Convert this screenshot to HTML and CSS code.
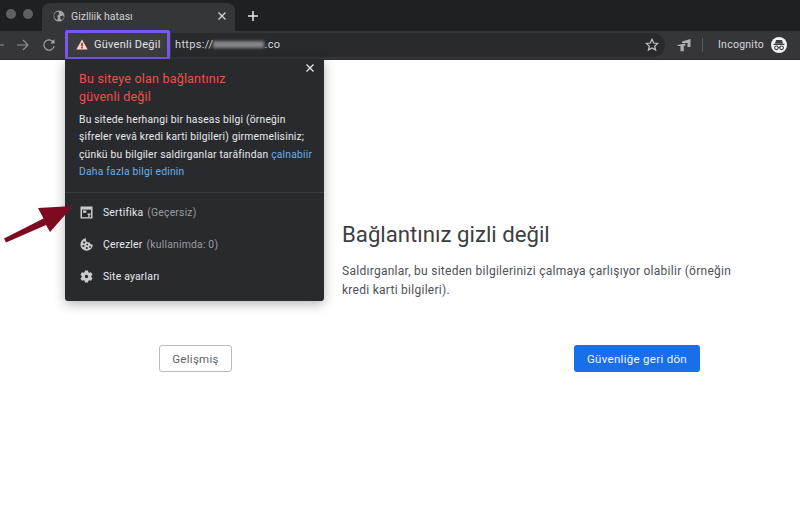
FILE: index.html
```html
<!DOCTYPE html>
<html lang="tr">
<head>
<meta charset="utf-8">
<title>Gizlilik hatası</title>
<link rel="stylesheet" href="styles.css">
</head>
<body>
<header class="chrome">
  <div class="tabstrip">
    <div class="lights"><span class="light"></span><span class="light"></span></div>
    <div class="tab">
      <svg class="globe" viewBox="0 0 12 12"><circle cx="6" cy="6" r="5.5" fill="#a3a5a8"/><path d="M2.4 2.4 5.4 1.6 6.2 4 4.2 6 5 8 4 10.2 1.6 8 1 5ZM7 6.4l3-1 1 2-2 2.6-1.5-1Z" fill="#35363a"/></svg>
      <span class="tab-title">Gizlliik hatası</span>
      <svg class="tab-close" viewBox="0 0 10 10"><path d="M1.5 1.5l7 7M8.5 1.5l-7 7" stroke="#d5d6d8" stroke-width="1.3"/></svg>
    </div>
    <svg class="new-tab" viewBox="0 0 12 12"><path d="M6 1v10M1 6h10" stroke="#e8eaed" stroke-width="1.5"/></svg>
  </div>
  <div class="toolbar">
    <svg class="nav-back" viewBox="0 0 14 14"><path d="M13 7H2M7 2 2 7l5 5" fill="none" stroke="#8f9195" stroke-width="1.2"/></svg>
    <svg class="nav-forward" viewBox="0 0 14 14"><path d="M1 7h11M7 2l5 5-5 5" fill="none" stroke="#8f9195" stroke-width="1.2"/></svg>
    <svg class="nav-reload" viewBox="0 0 14 14"><path d="M11.6 4.4A5.2 5.2 0 1 0 12.2 8" fill="none" stroke="#a5a7aa" stroke-width="1.2"/><path d="M12.5 1.2v4.2H8.3Z" fill="#a5a7aa"/></svg>
    <div class="omnibox">
      <div class="security">
        <svg class="warn" viewBox="0 0 12 11"><path d="M6 .5 11.7 10.5H.3Z" fill="#f8d4d0"/><path d="M5.2 3.8h1.6v3.6H5.2ZM5.2 8h1.6v1.4H5.2Z" fill="#b3201c"/></svg>
        <span>Güvenli Değil</span>
      </div>
      <div class="url">https://<span class="blur"></span>.co</div>
      <svg class="star" viewBox="0 0 14 14"><path d="M7 1.3 8.7 5l4 .4-3 2.7.9 4L7 10l-3.6 2.1.9-4-3-2.7 4-.4Z" fill="none" stroke="#c4c6c9" stroke-width="1.2"/></svg>
    </div>
    <svg class="ext" viewBox="0 0 14 14"><path d="M5 3.6 13.5 1v8h-3V5H5Z" fill="#aeb0b3"/><path d="M.5 7 8.3 5.6v2.2H6.8v5.4H3.5V8H.5Z" fill="#aeb0b3"/></svg>
    <span class="sep"></span>
    <span class="incognito">Incognito</span>
    <svg class="avatar" viewBox="0 0 16 16"><circle cx="8" cy="8" r="8" fill="#f1f3f4"/><path d="M5 3h6l1 3.4H4ZM2.6 6.8h10.8v1.2H2.6Z" fill="#3c4043"/><circle cx="5.4" cy="10.8" r="1.8" fill="none" stroke="#3c4043" stroke-width="1.1"/><circle cx="10.6" cy="10.8" r="1.8" fill="none" stroke="#3c4043" stroke-width="1.1"/><path d="M7 10.6h2" stroke="#3c4043"/></svg>
  </div>
</header>

<main class="page">
  <div class="interstitial">
    <h1 class="heading">Bağlantınız gizli değil</h1>
    <p class="body-text">Saldırganlar, bu siteden bilgilerinizi çalmaya çarlışıyor olabilir (örneğin kredi karti bilgileri).</p>
  </div>
  <div class="actions">
    <button class="btn btn-secondary">Gelişmiş</button>
    <button class="btn btn-primary">Güvenliğe geri dön</button>
  </div>
</main>

<div class="highlight"></div>

<aside class="popup">
  <svg class="popup-close" viewBox="0 0 10 10"><path d="M1.5 1.5l7 7M8.5 1.5l-7 7" stroke="#e8eaed" stroke-width="1.3"/></svg>
  <section class="popup-top">
    <h2 class="popup-title">Bu siteye olan bağlantınız<br>güvenli değil</h2>
    <p class="popup-text">Bu sitede herhangi bir haseas bilgi (örneğin<br>şifreler vevâ kredi karti bilgileri) girmemelisiniz;<br>çünkü bu bilgiler saldirganlar tarâfindan <a class="link">çalnabiir</a><br><a class="link">Daha fazla bilgi edinin</a></p>
  </section>
  <ul class="popup-list">
    <li class="popup-item">
      <svg class="item-icon" viewBox="0 0 13 13"><path d="M.5.5h12v12H.5Z" fill="#c9cbce"/><path d="M2 3.6h9v7.6H2Z" fill="#292a2d"/><path d="M3 4.6h3.4v2.2H3ZM7.6 7.6h3v1.4H9.6v2.2H8.2V9H7.6Z" fill="#c9cbce"/></svg>
      <span class="item-label">Sertifika</span> <span class="item-note">(Geçersiz)</span>
    </li>
    <li class="popup-item">
      <svg class="item-icon" viewBox="0 0 13 13"><path d="M6.2.3A6.2 6.2 0 1 0 12.8 6.6 2.8 2.8 0 0 1 9.6 4.3 2.8 2.8 0 0 1 6.2.3Z" fill="#c9cbce"/><circle cx="4.2" cy="4.4" r="1.1" fill="#292a2d"/><circle cx="3.4" cy="8" r="1.1" fill="#292a2d"/><circle cx="7.2" cy="6.6" r=".9" fill="#292a2d"/><circle cx="6.8" cy="10" r="1" fill="#292a2d"/><circle cx="10" cy="9" r=".9" fill="#292a2d"/></svg>
      <span class="item-label">Çerezler</span> <span class="item-note">(kullanimda: 0)</span>
    </li>
    <li class="popup-item">
      <svg class="item-icon" viewBox="0 0 14 14"><path fill-rule="evenodd" d="M5.4.6h3.2l.4 1.8 1.1.6 1.8-.6 1.6 2.8-1.4 1.3v1l1.4 1.3-1.6 2.8-1.8-.6-1.1.6-.4 1.8H5.4L5 11.6l-1.1-.6-1.8.6L.5 8.8l1.4-1.3v-1L.5 5.2l1.6-2.8 1.8.6L5 2.4ZM7 5.2a1.8 1.8 0 1 0 0 3.6A1.8 1.8 0 0 0 7 5.2Z" fill="#c9cbce"/></svg>
      <span class="item-label">Site ayarları</span>
    </li>
  </ul>
</aside>

<svg class="arrow" viewBox="0 0 80 46"><path d="M4 38.5 43.5 18.5 38 8 73 6 50 32 46 25 6 42.5Z" fill="#7e0a22"/></svg>
</body>
</html>
```
FILE: styles.css
```css
* { box-sizing: border-box; }
html, body { margin: 0; padding: 0; }
body {
  width: 800px;
  height: 529px;
  overflow: hidden;
  position: relative;
  background: #fff;
  font-family: Roboto, "Liberation Sans", sans-serif;
}

/* Browser chrome */
.chrome { height: 60px; display: flex; flex-direction: column; }
.tabstrip {
  height: 31px;
  background: #1f2023;
  display: flex;
  align-items: flex-start;
}
.lights { display: flex; gap: 7px; padding: 9px 0 0 6px; width: 42px; }
.light { width: 10px; height: 10px; border-radius: 50%; background: #5f6063; }
.tab {
  width: 193px;
  height: 28px;
  margin-top: 3px;
  background: #35363a;
  border-radius: 8px 8px 0 0;
  display: flex;
  align-items: center;
  padding: 0 8px 2px 11px;
  color: #d3d4d6;
}
.globe { width: 12px; height: 12px; }
.tab-title { font-size: 10.5px; margin-left: 6px; flex: 1; }
.tab-close { width: 10px; height: 10px; }
.new-tab { width: 12px; height: 12px; margin: 10px 0 0 12px; }

.toolbar {
  height: 29px;
  background: #35363a;
  border-bottom: 1px solid #2b2c2f;
  padding-bottom: 1px;
  display: flex;
  align-items: center;
  color: #e8eaed;
}
.nav-back { width: 14px; height: 14px; margin-left: -9px; }
.nav-forward { width: 14px; height: 14px; margin-left: 11px; }
.nav-reload { width: 14px; height: 14px; margin-left: 12px; }
.omnibox {
  width: 598px;
  height: 24px;
  margin-left: 11px;
  background: #292a2d;
  border-radius: 0 12px 12px 0;
  display: flex;
  align-items: center;
  padding-right: 6px;
}
.security {
  width: 104px;
  height: 100%;
  display: flex;
  align-items: center;
  gap: 6px;
  padding-left: 9px;
  background: #3c3d40;
  font-size: 11px;
  letter-spacing: .25px;
  color: #e3e4e6;
}
.warn { width: 12px; height: 11px; }
.url { margin-left: 4px; font-size: 11px; letter-spacing: .35px; color: #d5d6d8; flex: 1; display: flex; align-items: center; }
.blur { width: 51px; height: 7px; background: #85868a; filter: blur(1.5px); display: inline-block; }
.star { width: 14px; height: 14px; }
.ext { width: 14px; height: 14px; margin-left: 12px; }
.sep { width: 1px; height: 14px; background: #5a5b5e; margin-left: 11px; }
.incognito { font-size: 10.5px; letter-spacing: .25px; color: #d8d9db; margin-left: 15px; }
.avatar { width: 16px; height: 16px; margin-left: 7px; }

/* Interstitial */
.page { padding: 160px 0 0 0; }
.interstitial { padding-left: 342px; width: 745px; }
.heading { margin: 0; font-size: 22.2px; line-height: 28px; font-weight: 400; color: #3c4043; }
.body-text { margin: 14px 0 0; font-size: 12px; line-height: 19px; letter-spacing: .27px; color: #4d5156; }
.actions { display: flex; justify-content: space-between; margin-top: 45px; padding: 0 100px 0 159px; }
.btn { height: 27px; border-radius: 3px; font-family: inherit; font-size: 11.5px; letter-spacing: .3px; }
.btn-secondary { width: 73px; background: #fff; border: 1px solid #bcbcbc; color: #5f6368; }
.btn-primary { width: 126px; background: #1a6fe8; border: 0; color: #f2f6fe; }

/* Overlays */
.highlight {
  position: absolute;
  left: 65px; top: 30px;
  width: 105px; height: 30px;
  border: 3px solid #7a58ee;
  border-radius: 2px;
}
.popup {
  position: absolute;
  left: 65px; top: 59px;
  width: 259px; height: 242px;
  background: #292a2d;
  border-radius: 0 0 3px 3px;
  box-shadow: 0 3px 12px rgba(0,0,0,.3);
  color: #e8eaed;
}
.popup-close { position: absolute; left: 240px; top: 4px; width: 10px; height: 10px; }
.popup-top { padding: 11px 10px 0 14px; height: 134px; border-bottom: 1px solid #3c3d40; }
.popup-title { margin: 0; font-size: 12.5px; line-height: 18px; font-weight: 400; letter-spacing: .2px; color: #ee5145; }
.popup-text { margin: 5px 0 0; font-size: 10.3px; line-height: 17.3px; letter-spacing: .22px; color: #e8eaed; white-space: nowrap; }
.link { color: #68aeea; }
.popup-list { list-style: none; margin: 0; padding: 3px 0 0 15px; }
.popup-item { height: 32px; display: flex; align-items: center; font-size: 10.4px; letter-spacing: .2px; gap: 4px; }
.item-icon { width: 13px; height: 13px; margin-right: 6px; }
.item-label { color: #e8eaed; }
.item-note { color: #9a9c9f; }
.arrow { position: absolute; left: 0; top: 200px; width: 80px; height: 46px; }
```
